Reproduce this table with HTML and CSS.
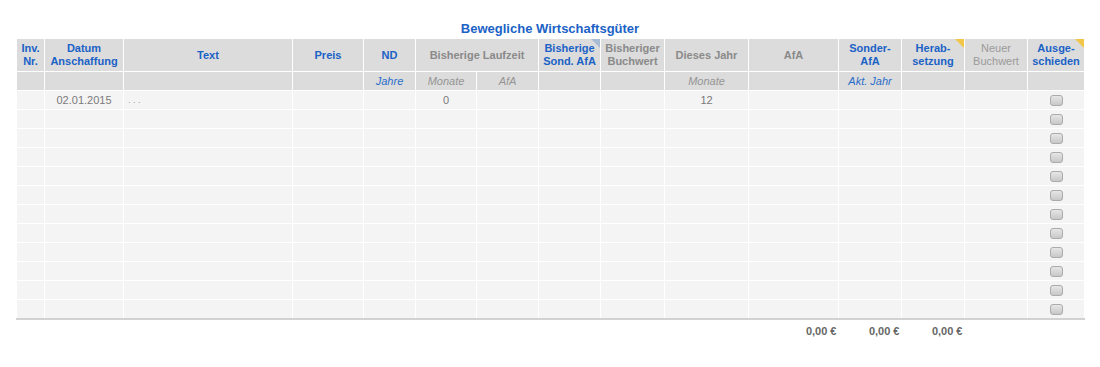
FILE: index.html
```html
<!DOCTYPE html>
<html lang="de">
<head>
<meta charset="utf-8">
<title>Bewegliche Wirtschaftsgüter</title>
<link rel="stylesheet" href="styles.css">
</head>
<body>
<div class="page">
  <h1 class="title">Bewegliche Wirtschaftsgüter</h1>
  <table class="grid">
    <colgroup>
      <col style="width:28px"><col style="width:79px"><col style="width:169px"><col style="width:71px"><col style="width:52px"><col style="width:61px"><col style="width:62px"><col style="width:62px"><col style="width:64px"><col style="width:84px"><col style="width:90px"><col style="width:63px"><col style="width:63px"><col style="width:63px"><col style="width:57px">
    </colgroup>
    <thead>
      <tr class="h1">
        <th class="blue">Inv.<br>Nr.</th>
        <th class="blue">Datum<br>Anschaffung</th>
        <th class="blue">Text</th>
        <th class="blue">Preis</th>
        <th class="blue">ND</th>
        <th class="gray" colspan="2">Bisherige Laufzeit</th>
        <th class="blue mark mark-blue">Bisherige<br>Sond. AfA</th>
        <th class="gray">Bisheriger<br>Buchwert</th>
        <th class="gray">Dieses Jahr</th>
        <th class="gray">AfA</th>
        <th class="blue">Sonder-<br>AfA</th>
        <th class="blue mark mark-yellow">Herab-<br>setzung</th>
        <th class="gray light">Neuer<br>Buchwert</th>
        <th class="blue mark mark-yellow">Ausge-<br>schieden</th>
      </tr>
      <tr class="h2">
        <th></th><th></th><th></th><th></th>
        <th class="sub blue">Jahre</th>
        <th class="sub gray">Monate</th>
        <th class="sub gray">AfA</th>
        <th></th><th></th>
        <th class="sub gray">Monate</th>
        <th></th>
        <th class="sub blue">Akt. Jahr</th>
        <th></th><th></th><th></th>
      </tr>
    </thead>
    <tbody>
      <tr><td></td><td class="c">02.01.2015</td><td class="l">. . .</td><td></td><td></td><td class="c">0</td><td></td><td></td><td></td><td class="c">12</td><td></td><td></td><td></td><td></td><td class="c"><span class="box"></span></td></tr>
      <tr><td></td><td></td><td></td><td></td><td></td><td></td><td></td><td></td><td></td><td></td><td></td><td></td><td></td><td></td><td class="c"><span class="box"></span></td></tr>
      <tr><td></td><td></td><td></td><td></td><td></td><td></td><td></td><td></td><td></td><td></td><td></td><td></td><td></td><td></td><td class="c"><span class="box"></span></td></tr>
      <tr><td></td><td></td><td></td><td></td><td></td><td></td><td></td><td></td><td></td><td></td><td></td><td></td><td></td><td></td><td class="c"><span class="box"></span></td></tr>
      <tr><td></td><td></td><td></td><td></td><td></td><td></td><td></td><td></td><td></td><td></td><td></td><td></td><td></td><td></td><td class="c"><span class="box"></span></td></tr>
      <tr><td></td><td></td><td></td><td></td><td></td><td></td><td></td><td></td><td></td><td></td><td></td><td></td><td></td><td></td><td class="c"><span class="box"></span></td></tr>
      <tr><td></td><td></td><td></td><td></td><td></td><td></td><td></td><td></td><td></td><td></td><td></td><td></td><td></td><td></td><td class="c"><span class="box"></span></td></tr>
      <tr><td></td><td></td><td></td><td></td><td></td><td></td><td></td><td></td><td></td><td></td><td></td><td></td><td></td><td></td><td class="c"><span class="box"></span></td></tr>
      <tr><td></td><td></td><td></td><td></td><td></td><td></td><td></td><td></td><td></td><td></td><td></td><td></td><td></td><td></td><td class="c"><span class="box"></span></td></tr>
      <tr><td></td><td></td><td></td><td></td><td></td><td></td><td></td><td></td><td></td><td></td><td></td><td></td><td></td><td></td><td class="c"><span class="box"></span></td></tr>
      <tr><td></td><td></td><td></td><td></td><td></td><td></td><td></td><td></td><td></td><td></td><td></td><td></td><td></td><td></td><td class="c"><span class="box"></span></td></tr>
      <tr><td></td><td></td><td></td><td></td><td></td><td></td><td></td><td></td><td></td><td></td><td></td><td></td><td></td><td></td><td class="c"><span class="box"></span></td></tr>
    </tbody>
    <tfoot>
      <tr>
        <td></td><td></td><td></td><td></td><td></td><td></td><td></td><td></td><td></td><td></td>
        <td class="sum">0,00 €</td>
        <td class="sum">0,00 €</td>
        <td class="sum">0,00 €</td>
        <td></td><td></td>
      </tr>
    </tfoot>
  </table>
</div>
</body>
</html>
```
FILE: styles.css
```css
html, body {
  margin: 0;
  padding: 0;
  background: #ffffff;
  font-family: "Liberation Sans", Arial, Helvetica, sans-serif;
}

.page {
  padding: 21px 16px 0 16px;
}

.title {
  margin: 0 0 2px 0;
  width: 1068px;
  text-align: center;
  font-size: 13px;
  line-height: 15px;
  font-weight: bold;
  color: #1b62c6;
}

.grid {
  width: 1068px;
  table-layout: fixed;
  border-collapse: collapse;
}

.grid th,
.grid td {
  border: 1px solid #ffffff;
  padding: 0 1px;
  overflow: hidden;
  white-space: nowrap;
}

.grid thead th {
  background: #dcdcdc;
  font-size: 11px;
  line-height: 13px;
  font-weight: bold;
  text-align: center;
}

.grid thead tr.h1 th {
  height: 32px;
  position: relative;
}

.grid thead tr.h2 th {
  height: 18px;
  font-weight: normal;
  font-style: italic;
  font-size: 11px;
}

.grid th.blue { color: #1b62c6; }
.grid th.gray { color: #8a8a8a; }
.grid th.light { color: #9a9a9a; font-weight: normal; }
.grid th.sub.blue { color: #2a6cc9; }
.grid th.sub.gray { color: #959595; }

.grid th.mark::after {
  content: "";
  position: absolute;
  top: 0;
  right: 0;
  width: 0;
  height: 0;
  border-style: solid;
  border-width: 0 9px 9px 0;
}

.grid th.mark-blue::after { border-color: transparent #a9bcd3 transparent transparent; }
.grid th.mark-yellow::after { border-color: transparent #f2c64a transparent transparent; }

.grid tbody td {
  background: #f4f4f4;
  height: 18px;
  font-size: 11px;
  line-height: 13px;
  color: #7a7a7a;
}

.grid tbody tr:last-child td {
  border-bottom: 2px solid #d2d2d2;
}

.grid td.c { text-align: center; }
.grid td.l { text-align: left; padding-left: 4px; color: #a0a0a0; font-size: 9px; }

.box {
  display: inline-block;
  width: 13px;
  height: 11px;
  border-radius: 3px;
  border: 1px solid #ababab;
  background: linear-gradient(#e6e6e6, #c8c8c8);
  vertical-align: middle;
  box-sizing: border-box;
}

.grid tfoot td {
  border: none;
  height: 22px;
  padding: 0 2px 0 0;
  font-size: 11px;
  font-weight: bold;
  color: #666666;
}

.grid td.sum {
  text-align: right;
  vertical-align: middle;
}
```
